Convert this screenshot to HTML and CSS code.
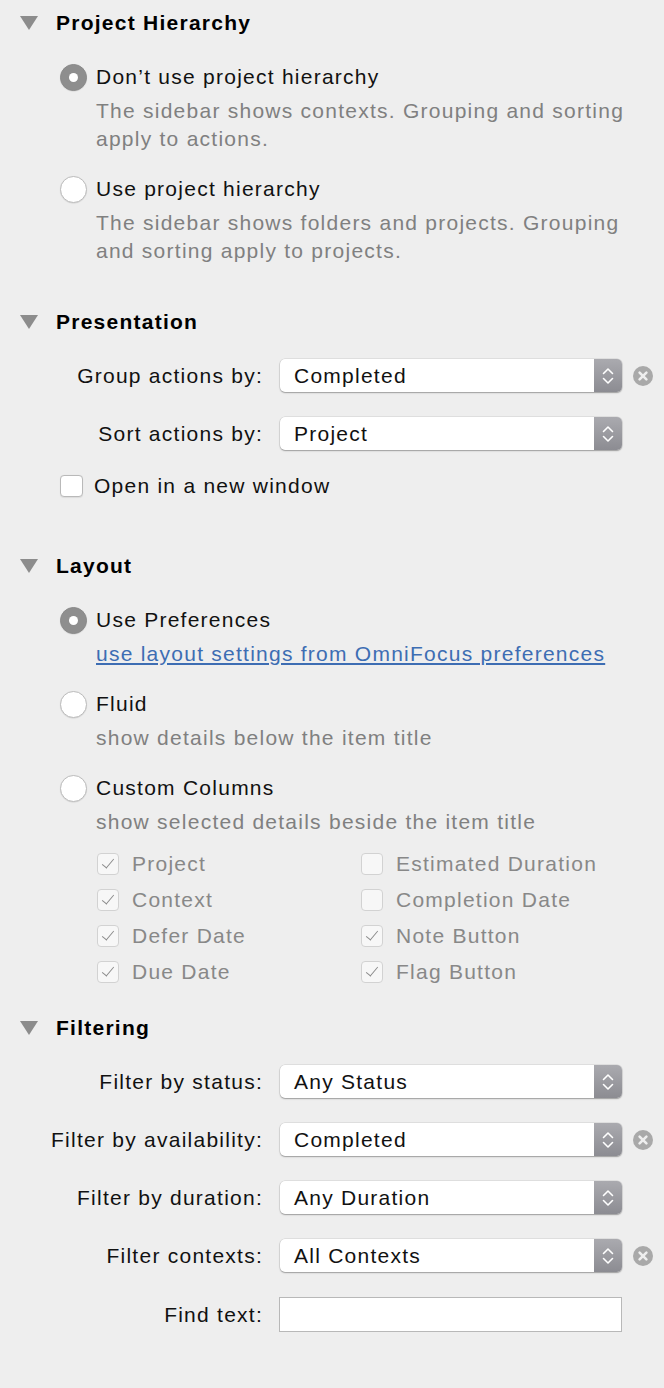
FILE: index.html
```html
<!DOCTYPE html>
<html>
<head>
<meta charset="utf-8">
<link rel="stylesheet" href="styles.css">
</head>
<body>
<div class="panel">

  <section class="section s1">
    <div class="section-head"><span class="disclosure"></span><h2>Project Hierarchy</h2></div>
    <div class="option first"><span class="radio checked"></span><span>Don’t use project hierarchy</span></div>
    <p class="desc">The sidebar shows contexts. Grouping and sorting<br>apply to actions.</p>
    <div class="option"><span class="radio"></span><span>Use project hierarchy</span></div>
    <p class="desc">The sidebar shows folders and projects. Grouping<br>and sorting apply to projects.</p>
  </section>

  <section class="section s2">
    <div class="section-head"><span class="disclosure"></span><h2>Presentation</h2></div>
    <div class="form">
      <label class="form-label">Group actions by:</label>
      <div class="popup"><span class="popup-text">Completed</span><span class="stepper"><svg width="14" height="22" viewBox="0 0 14 22"><path d="M2.5 8.5 L7 4 L11.5 8.5 M2.5 13.5 L7 18 L11.5 13.5" fill="none" stroke="#fff" stroke-width="1.6" stroke-linecap="round" stroke-linejoin="round"/></svg></span></div>
      <span class="clear"><svg width="20" height="20" viewBox="0 0 20 20"><circle cx="10" cy="10" r="10" fill="#a9a9a9"/><path d="M6.6 6.6 L13.4 13.4 M13.4 6.6 L6.6 13.4" stroke="#eeeeee" stroke-width="2.6" stroke-linecap="round"/></svg></span>

      <label class="form-label">Sort actions by:</label>
      <div class="popup"><span class="popup-text">Project</span><span class="stepper"><svg width="14" height="22" viewBox="0 0 14 22"><path d="M2.5 8.5 L7 4 L11.5 8.5 M2.5 13.5 L7 18 L11.5 13.5" fill="none" stroke="#fff" stroke-width="1.6" stroke-linecap="round" stroke-linejoin="round"/></svg></span></div>
      <span></span>
    </div>
    <div class="check-row"><span class="checkbox"></span><span>Open in a new window</span></div>
  </section>

  <section class="section s3">
    <div class="section-head"><span class="disclosure"></span><h2>Layout</h2></div>
    <div class="option first"><span class="radio checked"></span><span>Use Preferences</span></div>
    <p class="desc"><a class="link" href="#">use layout settings from OmniFocus preferences</a></p>
    <div class="option"><span class="radio"></span><span>Fluid</span></div>
    <p class="desc">show details below the item title</p>
    <div class="option"><span class="radio"></span><span>Custom Columns</span></div>
    <p class="desc">show selected details beside the item title</p>
    <div class="columns">
      <div class="col-item"><span class="checkbox disabled checked"></span><span>Project</span></div>
      <div class="col-item"><span class="checkbox disabled"></span><span>Estimated Duration</span></div>
      <div class="col-item"><span class="checkbox disabled checked"></span><span>Context</span></div>
      <div class="col-item"><span class="checkbox disabled"></span><span>Completion Date</span></div>
      <div class="col-item"><span class="checkbox disabled checked"></span><span>Defer Date</span></div>
      <div class="col-item"><span class="checkbox disabled checked"></span><span>Note Button</span></div>
      <div class="col-item"><span class="checkbox disabled checked"></span><span>Due Date</span></div>
      <div class="col-item"><span class="checkbox disabled checked"></span><span>Flag Button</span></div>
    </div>
  </section>

  <section class="section s4">
    <div class="section-head"><span class="disclosure"></span><h2>Filtering</h2></div>
    <div class="form">
      <label class="form-label">Filter by status:</label>
      <div class="popup"><span class="popup-text">Any Status</span><span class="stepper"><svg width="14" height="22" viewBox="0 0 14 22"><path d="M2.5 8.5 L7 4 L11.5 8.5 M2.5 13.5 L7 18 L11.5 13.5" fill="none" stroke="#fff" stroke-width="1.6" stroke-linecap="round" stroke-linejoin="round"/></svg></span></div>
      <span></span>

      <label class="form-label">Filter by availability:</label>
      <div class="popup"><span class="popup-text">Completed</span><span class="stepper"><svg width="14" height="22" viewBox="0 0 14 22"><path d="M2.5 8.5 L7 4 L11.5 8.5 M2.5 13.5 L7 18 L11.5 13.5" fill="none" stroke="#fff" stroke-width="1.6" stroke-linecap="round" stroke-linejoin="round"/></svg></span></div>
      <span class="clear"><svg width="20" height="20" viewBox="0 0 20 20"><circle cx="10" cy="10" r="10" fill="#a9a9a9"/><path d="M6.6 6.6 L13.4 13.4 M13.4 6.6 L6.6 13.4" stroke="#eeeeee" stroke-width="2.6" stroke-linecap="round"/></svg></span>

      <label class="form-label">Filter by duration:</label>
      <div class="popup"><span class="popup-text">Any Duration</span><span class="stepper"><svg width="14" height="22" viewBox="0 0 14 22"><path d="M2.5 8.5 L7 4 L11.5 8.5 M2.5 13.5 L7 18 L11.5 13.5" fill="none" stroke="#fff" stroke-width="1.6" stroke-linecap="round" stroke-linejoin="round"/></svg></span></div>
      <span></span>

      <label class="form-label">Filter contexts:</label>
      <div class="popup"><span class="popup-text">All Contexts</span><span class="stepper"><svg width="14" height="22" viewBox="0 0 14 22"><path d="M2.5 8.5 L7 4 L11.5 8.5 M2.5 13.5 L7 18 L11.5 13.5" fill="none" stroke="#fff" stroke-width="1.6" stroke-linecap="round" stroke-linejoin="round"/></svg></span></div>
      <span class="clear"><svg width="20" height="20" viewBox="0 0 20 20"><circle cx="10" cy="10" r="10" fill="#a9a9a9"/><path d="M6.6 6.6 L13.4 13.4 M13.4 6.6 L6.6 13.4" stroke="#eeeeee" stroke-width="2.6" stroke-linecap="round"/></svg></span>

      <label class="form-label">Find text:</label>
      <div class="textfield"></div>
      <span></span>
    </div>
  </section>

</div>
</body>
</html>
```

FILE: styles.css
```css
html, body {
  margin: 0;
  background: #eeeeee;
}

body {
  font-family: "Liberation Sans", Arial, sans-serif;
  font-size: 21px;
  letter-spacing: 1.25px;
  color: #111111;
}

.panel {
  padding-top: 9px;
  width: 664px;
  height: 1379px;
}

.section-head {
  display: flex;
  align-items: center;
  height: 28px;
  padding-left: 20px;
}

.disclosure {
  width: 18px;
  height: 14px;
  background: #8c8c8c;
  clip-path: polygon(0 0, 100% 0, 50% 100%);
  margin-right: 18px;
}

h2 {
  margin: 0;
  font-size: 21px;
  font-weight: bold;
  line-height: 28px;
  color: #000000;
}

.s2 { margin-top: 43px; }
.s3 { margin-top: 52px; }
.s4 { margin-top: 24px; }

.option {
  display: flex;
  align-items: center;
  height: 28px;
  padding-left: 60px;
  gap: 9px;
  margin-top: 22px;
}

.option.first { margin-top: 26px; }

.radio {
  box-sizing: border-box;
  width: 27px;
  height: 27px;
  border-radius: 50%;
  background: #ffffff;
  border: 1px solid #bcbcbc;
  box-shadow: 0 0.5px 1px rgba(0, 0, 0, 0.12);
  flex: none;
  display: flex;
  align-items: center;
  justify-content: center;
}

.radio.checked {
  background: #8e8e8e;
  border-color: #8a8a8a;
}

.radio.checked::after {
  content: "";
  width: 9px;
  height: 9px;
  border-radius: 50%;
  background: #ffffff;
}

.desc {
  margin: 6px 0 0 96px;
  line-height: 28px;
  color: #808080;
}

.link {
  color: #3d6db3;
  text-decoration: underline;
}

.form {
  display: grid;
  grid-template-columns: 263px 342px 20px;
  column-gap: 17px;
  row-gap: 25px;
  align-items: center;
  margin-top: 23px;
}

.form-label {
  text-align: right;
  line-height: 33px;
}

.popup {
  height: 33px;
  display: flex;
  align-items: stretch;
  background: #ffffff;
  border-radius: 5px;
  box-shadow: 0 0 0 0.5px rgba(0, 0, 0, 0.12), 0 1px 1.5px rgba(0, 0, 0, 0.3);
  overflow: hidden;
}

.popup-text {
  flex: 1;
  padding-left: 14px;
  line-height: 33px;
  color: #111111;
}

.stepper {
  width: 28px;
  flex: none;
  background: linear-gradient(#aaaaaf, #8c8c92);
  display: flex;
  align-items: center;
  justify-content: center;
}

.clear {
  display: flex;
  align-items: center;
  margin-left: -6px;
}

.textfield {
  box-sizing: border-box;
  height: 35px;
  background: #ffffff;
  border: 1px solid #b8b8b8;
  margin-left: -1px;
}

.check-row {
  display: flex;
  align-items: center;
  height: 28px;
  margin-top: 22px;
  padding-left: 60px;
  gap: 11px;
}

.checkbox {
  box-sizing: border-box;
  width: 23px;
  height: 22px;
  border-radius: 4px;
  background: #ffffff;
  border: 1px solid #b9b9b9;
  box-shadow: 0 0.5px 1px rgba(0, 0, 0, 0.08);
  flex: none;
  position: relative;
}

.checkbox.disabled {
  width: 22px;
  background: #f7f7f7;
  border-color: #d2d2d2;
  box-shadow: none;
}

.checkbox.checked::after {
  content: "";
  position: absolute;
  left: 7px;
  top: 2px;
  width: 5px;
  height: 11px;
  border-right: 1.6px solid #8a8a8a;
  border-bottom: 1.6px solid #8a8a8a;
  transform: rotate(40deg);
}

.columns {
  display: grid;
  grid-template-columns: 264px 264px;
  grid-auto-rows: 36px;
  margin: 10px 0 0 97px;
}

.col-item {
  display: flex;
  align-items: center;
  gap: 13px;
  color: #888888;
}
```
